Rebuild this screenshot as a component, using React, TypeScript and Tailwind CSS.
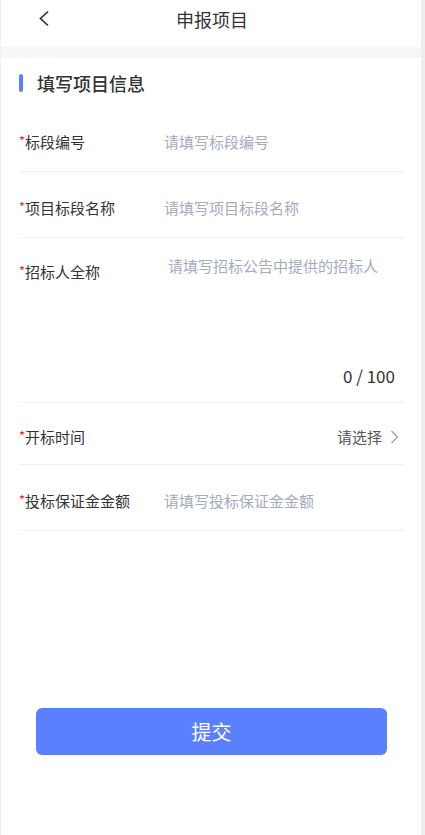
import { useState } from "react";

const font = { fontFamily: '"Noto Sans CJK SC", "Noto Sans", sans-serif' };

const Label = ({ text }: { text: string }) => (
  <div className="w-[145px] shrink-0 flex items-center text-[15px] leading-[20px] text-[#333333]">
    <span className="text-[13px] text-[#ff2020] leading-none -mt-[4px]">*</span>
    <span>{text}</span>
  </div>
);

const Field = ({ label, placeholder, pt, pb }: { label: string; placeholder: string; pt: string; pb: string }) => (
  <div className={`flex items-center border-b border-[#edf0f4] ${pt} ${pb}`}>
    <Label text={label} />
    <input
      placeholder={placeholder}
      className="flex-1 min-w-0 bg-transparent outline-none text-[15px] leading-[20px] text-[#333] placeholder:text-[#a3abbd]"
    />
  </div>
);

export default function App() {
  const [name, setName] = useState("");

  return (
    <div className="min-h-[835px] flex bg-white" style={font}>
      <div className="w-px shrink-0 bg-[#f1f1f1]" />
      <div className="w-[420px] shrink-0 flex flex-col bg-white">
        {/* top bar */}
        <div className="h-[47px] flex items-center relative">
          <button className="absolute left-[35px] top-[9px] w-[16px] h-[18px] flex items-center justify-center">
            <svg width="12" height="17" viewBox="0 0 12 17" fill="none">
              <path d="M10 1.5L2.5 8.5L10 15.5" stroke="#333" strokeWidth="1.7" />
            </svg>
          </button>
          <div className="flex-1 text-center text-[18px] text-[#333333] -mt-[8px] pl-[2px]">申报项目</div>
        </div>
        <div className="h-[11px] bg-[#f5f7fa]" />

        {/* section */}
        <div className="flex items-center gap-[14px] pl-[18px] pt-[14px] pb-[12px]">
          <div className="w-[4px] h-[18px] rounded-full bg-[#5b80ff]" />
          <div className="text-[18px] leading-[22px] font-medium text-[#333333]">填写项目信息</div>
        </div>

        <div className="pl-[18px] pr-[17px] flex flex-col">
          <Field label="标段编号" placeholder="请填写标段编号" pt="pt-[26px]" pb="pb-[19px]" />
          <Field label="项目标段名称" placeholder="请填写项目标段名称" pt="pt-[26px]" pb="pb-[19px]" />

          <div className="flex flex-col border-b border-[#edf0f4] pt-[24px] pb-[15px]">
            <div className="flex items-start">
              <Label text="招标人全称" />
              <textarea
                value={name}
                maxLength={100}
                onChange={(e) => setName(e.target.value)}
                placeholder="请填写招标公告中提供的招标人"
                className="flex-1 min-w-0 h-[105px] -mt-[6px] pl-[4px] resize-none bg-transparent outline-none text-[15px] leading-[20px] text-[#333] placeholder:text-[#a3abbd]"
              />
            </div>
            <div className="text-right pr-[9px] mt-[4px] text-[17px] leading-[22px] text-[#333333] whitespace-pre">
              {name.length} / 100
            </div>
          </div>

          <div className="flex items-center border-b border-[#edf0f4] pt-[24px] pb-[17px]">
            <Label text="开标时间" />
            <div className="flex-1 flex items-center justify-end gap-[8px] pr-[5px] text-[15px] leading-[20px] text-[#555555]">
              <span>请选择</span>
              <svg width="9" height="14" viewBox="0 0 9 14" fill="none">
                <path d="M1.5 1L7.5 7L1.5 13" stroke="#9aa0ab" strokeWidth="1.3" />
              </svg>
            </div>
          </div>

          <Field label="投标保证金金额" placeholder="请填写投标保证金金额" pt="pt-[26px]" pb="pb-[19px]" />
        </div>

        <div className="mt-[177px] pl-[35px] pr-[34px]">
          <button className="w-full h-[47px] rounded-[6px] bg-[#5b80ff] text-white text-[20px]">提交</button>
        </div>
      </div>
      <div className="w-[4px] shrink-0 bg-[#eeeeee]" />
    </div>
  );
}
